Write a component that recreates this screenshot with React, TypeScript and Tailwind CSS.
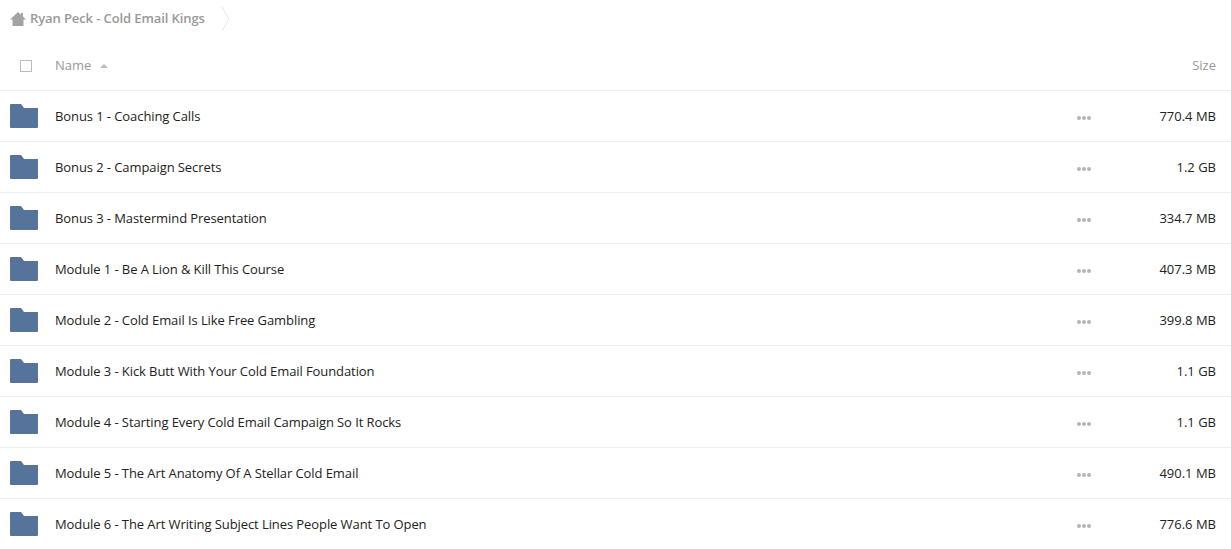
const folders = [
  { name: "Bonus 1 - Coaching Calls", size: "770.4 MB" },
  { name: "Bonus 2 - Campaign Secrets", size: "1.2 GB" },
  { name: "Bonus 3 - Mastermind Presentation", size: "334.7 MB" },
  { name: "Module 1 - Be A Lion & Kill This Course", size: "407.3 MB" },
  { name: "Module 2 - Cold Email Is Like Free Gambling", size: "399.8 MB" },
  { name: "Module 3 - Kick Butt With Your Cold Email Foundation", size: "1.1 GB" },
  { name: "Module 4 - Starting Every Cold Email Campaign So It Rocks", size: "1.1 GB" },
  { name: "Module 5 - The Art Anatomy Of A Stellar Cold Email", size: "490.1 MB" },
  { name: "Module 6 - The Art Writing Subject Lines People Want To Open", size: "776.6 MB" },
];

function FolderIcon() {
  return (
    <svg width="28" height="24" viewBox="0 0 28 24" className="shrink-0">
      <path d="M0 1a1 1 0 0 1 1-1h10l3 4h14v19a1 1 0 0 1-1 1H1a1 1 0 0 1-1-1z" fill="#56739c" />
    </svg>
  );
}

function HomeIcon() {
  return (
    <svg width="16" height="14" viewBox="0 0 16 14" className="mt-px shrink-0">
      <path d="M8 0 L11 2.7 V1 H13 V4.5 L16 7.5 H13.5 V14 H2.5 V7.5 H0 Z" fill="#a3a3a3" />
    </svg>
  );
}

function Dots() {
  return (
    <span className="flex gap-px">
      <span className="h-1 w-1 rounded-full bg-[#b5b5b5]" />
      <span className="h-1 w-1 rounded-full bg-[#b5b5b5]" />
      <span className="h-1 w-1 rounded-full bg-[#b5b5b5]" />
    </span>
  );
}

export default function App() {
  return (
    <div className="h-[549px] overflow-hidden bg-white font-['Open_Sans',sans-serif] text-[13px] text-[#222222]">
      <div className="flex h-[36px] items-center pl-[10px] font-semibold text-[#999999]">
        <HomeIcon />
        <span className="ml-1 mt-[2px] tracking-[-0.1px]">Ryan Peck - Cold Email Kings</span>
        <svg width="10" height="26" viewBox="0 0 10 26" className="ml-[16px] mt-px">
          <path d="M1 1 L8 13 L1 25" fill="none" stroke="#e6e6e6" />
        </svg>
      </div>

      <div className="flex h-[55px] items-center border-b border-[#eeeeee] pt-[5px] text-[#999999]">
        <span className="ml-[20px] h-3 w-3 border border-[#bbbbbb]" />
        <span className="ml-[23px]">Name</span>
        <span className="ml-[9px] h-0 w-0 border-x-4 border-b-4 border-x-transparent border-b-[#bbbbbb]" />
        <span className="ml-auto pr-[15px]">Size</span>
      </div>

      {folders.map((f) => (
        <div key={f.name} className="flex h-[51px] items-center border-b border-[#eeeeee] pl-[10px]">
          <FolderIcon />
          <span className="ml-[17px] mt-[2px] tracking-[-0.085px]">{f.name}</span>
          <span className="ml-auto mt-[4px]">
            <Dots />
          </span>
          <span className="mt-[2px] w-[140px] pr-[15px] text-right">{f.size}</span>
        </div>
      ))}
    </div>
  );
}
